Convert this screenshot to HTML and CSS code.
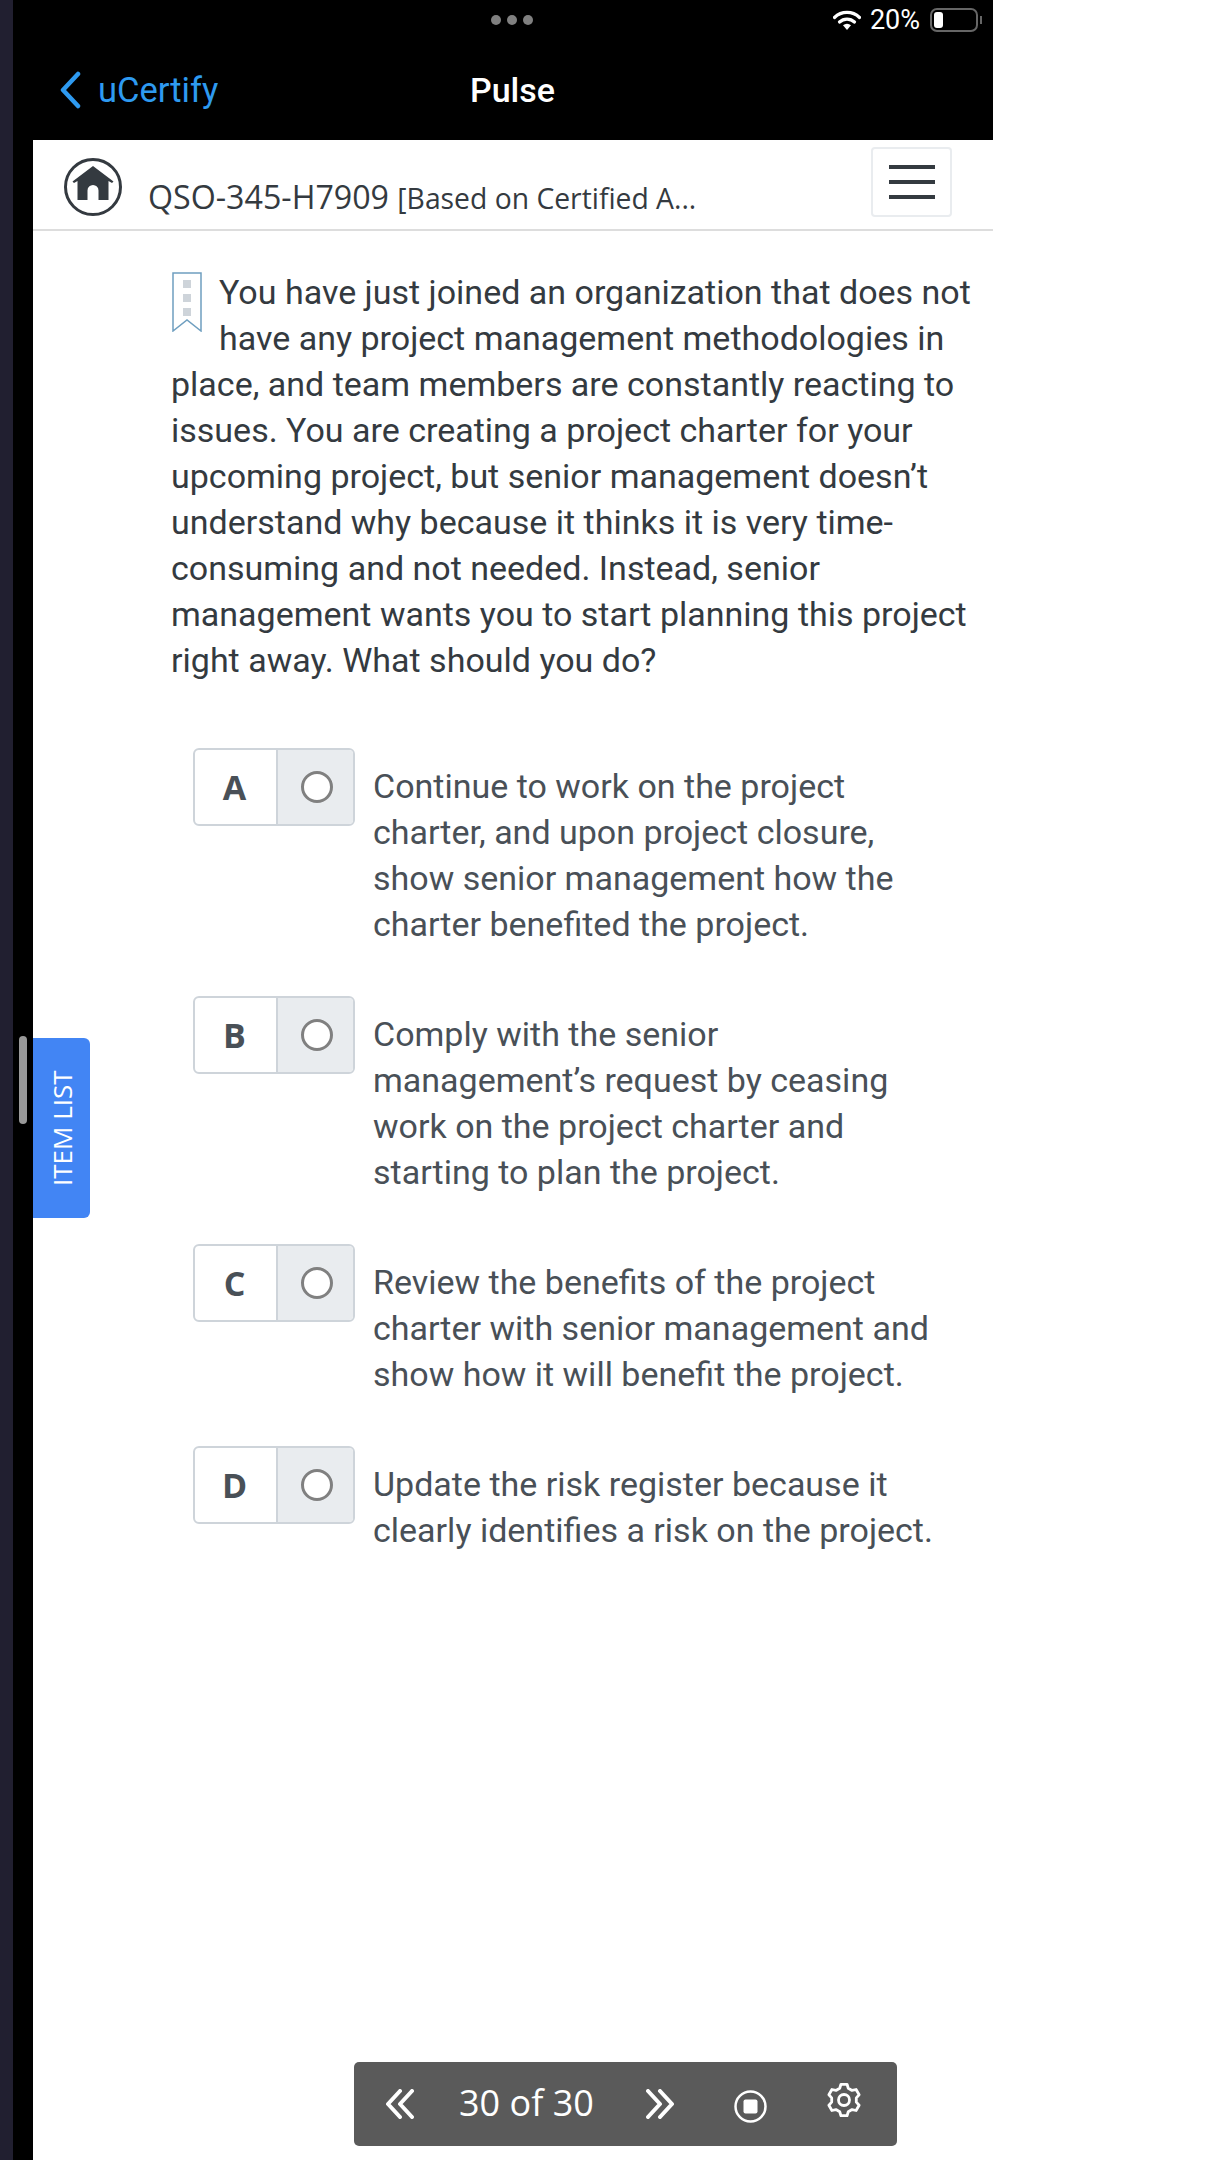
FILE: index.html
```html
<!DOCTYPE html>
<html lang="en">
    <head>
        <meta charset="UTF-8">
        <meta name="viewport" content="width=device-width, initial-scale=1.0">
        <title>Pulse</title>
        <link rel="stylesheet" href="styles.css">
    </head>
    <body>
        <div class="rail"></div>
        <div class="phone">
            <div class="status-bar">
                <div class="dots"><span></span><span></span><span></span></div>
                <div class="status-right">
                    <svg class="wifi" width="28" height="20" viewBox="0 0 28 20">
                        <path d="M1.5 7.5a18 18 0 0 1 25 0" fill="none" stroke="#fff" stroke-width="3.2" stroke-linecap="round"/>
                        <path d="M6.5 12a11 11 0 0 1 15 0" fill="none" stroke="#fff" stroke-width="3.2" stroke-linecap="round"/>
                        <path d="M10 15.2a6 6 0 0 1 8 0L14 20z" fill="#fff"/>
                    </svg>
                    <span class="battery-pct">20%</span>
                    <div class="battery"><div class="battery-fill"></div></div>
                    <div class="battery-nub"></div>
                </div>
            </div>
            <div class="nav-bar">
                <div class="nav-back">
                    <svg width="24" height="38" viewBox="0 0 24 38">
                        <path d="M20 3L5 19l15 16" fill="none" stroke="#2e9af0" stroke-width="4.5" stroke-linecap="round" stroke-linejoin="round"/>
                    </svg>
                    <span>uCertify</span>
                </div>
                <div class="nav-title">Pulse</div>
            </div>
            <div class="sheet">
                <div class="top-bar">
                    <svg class="home" width="58" height="58" viewBox="0 0 58 58">
                        <circle cx="29" cy="29" r="27.5" fill="none" stroke="#343a40" stroke-width="3"/>
                        <path d="M29 8L49.5 23.5 48 25 44.5 23V42H34.5V32.5a5.5 5.5 0 0 0-11 0V42H13.5V23L10 25 8.5 23.5z" fill="#343a40"/>
                    </svg>
                    <div class="course-title">QSO-345-H7909 <small>[Based on Certified A...</small></div>
                    <button class="menu-btn"><span></span><span></span><span></span></button>
                </div>

                <div class="question">
                    <svg class="bookmark" width="30" height="60" viewBox="0 0 30 60">
                        <path d="M1 1H29V59L15 48 1 59z" fill="#fff" stroke="#6f9fc0" stroke-width="1.5"/>
                        <rect x="11" y="8" width="8" height="8" fill="#ced4da"/>
                        <rect x="11" y="22" width="8" height="8" fill="#ced4da"/>
                        <rect x="11" y="36" width="8" height="8" fill="#ced4da"/>
                    </svg>
                    You have just joined an organization that does not have any project management methodologies in place, and team members are constantly reacting to issues. You are creating a project charter for your upcoming project, but senior management doesn’t understand why because it thinks it is very time-consuming and not needed. Instead, senior management wants you to start planning this project right away. What should you do?
                </div>

                <div class="options">
                    <div class="option">
                        <div class="option-box">
                            <div class="option-letter">A</div>
                            <div class="option-radio"><span></span></div>
                        </div>
                        <div class="option-text">Continue to work on the project charter, and upon project closure, show senior management how the charter benefited the project.</div>
                    </div>
                    <div class="option">
                        <div class="option-box">
                            <div class="option-letter">B</div>
                            <div class="option-radio"><span></span></div>
                        </div>
                        <div class="option-text">Comply with the senior management’s request by ceasing work on the project charter and starting to plan the project.</div>
                    </div>
                    <div class="option">
                        <div class="option-box">
                            <div class="option-letter">C</div>
                            <div class="option-radio"><span></span></div>
                        </div>
                        <div class="option-text">Review the benefits of the project charter with senior management and show how it will benefit the project.</div>
                    </div>
                    <div class="option">
                        <div class="option-box">
                            <div class="option-letter">D</div>
                            <div class="option-radio"><span></span></div>
                        </div>
                        <div class="option-text">Update the risk register because it clearly identifies a risk on the project.</div>
                    </div>
                </div>

                <div class="pager">
                    <svg class="pager-prev" width="28" height="30" viewBox="0 0 28 30">
                        <path d="M14 2L2 15l12 13M26 2L14 15l12 13" fill="none" stroke="#fff" stroke-width="4" stroke-linecap="round" stroke-linejoin="round"/>
                    </svg>
                    <span class="pager-count">30 of 30</span>
                    <svg class="pager-next" width="28" height="30" viewBox="0 0 28 30">
                        <path d="M2 2l12 13L2 28M14 2l12 13-12 13" fill="none" stroke="#fff" stroke-width="4" stroke-linecap="round" stroke-linejoin="round"/>
                    </svg>
                    <svg class="pager-stop" width="33" height="33" viewBox="0 0 33 33">
                        <circle cx="16.5" cy="16.5" r="15" fill="none" stroke="#fff" stroke-width="2.5"/>
                        <rect x="9.5" y="9.5" width="14" height="14" rx="2" fill="#fff"/>
                    </svg>
                    <svg class="pager-gear" width="36" height="36" viewBox="0 0 36 36">
                        <path d="M13.72 6.25L14.95 2.29H21.05L22.28 6.25 26.04 8.42 30.08 7.5 33.13 12.79 30.31 15.83V20.17L33.13 23.21 30.08 28.5 26.04 27.58 22.28 29.75 21.05 33.71H14.95L13.72 29.75 9.96 27.58 5.92 28.5 2.87 23.21 5.69 20.17V15.83L2.87 12.79 5.92 7.5 9.96 8.42z" fill="none" stroke="#fff" stroke-width="2.8" stroke-linejoin="round"/>
                        <circle cx="18" cy="18" r="5.5" fill="none" stroke="#fff" stroke-width="2.8"/>
                    </svg>
                </div>

                <div class="item-list-tab">ITEM LIST</div>
            </div>
            <div class="scroll-thumb"></div>
        </div>
    </body>
</html>
```

FILE: styles.css
```css
body {
    font-family: Roboto, "Liberation Sans", sans-serif;
    margin: 0;
    padding: 0;
    display: flex;
    height: 2160px;
    overflow: hidden;
    background-color: #fff;
}

.rail {
    width: 13px;
    background-color: #211f30;
}

.phone {
    position: relative;
    width: 980px;
    display: flex;
    flex-direction: column;
    background-color: #000;
}

/* status bar */
.status-bar {
    position: relative;
    height: 40px;
    display: flex;
    justify-content: flex-end;
    align-items: center;
    padding-right: 11px;
}

.dots {
    position: absolute;
    left: 478px;
    top: 15px;
    display: flex;
    gap: 6px;
}

.dots span {
    width: 10px;
    height: 10px;
    border-radius: 50%;
    background-color: #808080;
}

.status-right {
    display: flex;
    align-items: center;
    color: #fff;
}

.battery-pct {
    font-size: 27px;
    margin: 0 10px 0 9px;
}

.battery {
    width: 48px;
    height: 24px;
    box-sizing: border-box;
    border: 2px solid #666;
    border-radius: 7px;
    padding: 2px;
}

.battery-fill {
    width: 9px;
    height: 100%;
    background-color: #fff;
    border-radius: 3px;
}

.battery-nub {
    width: 2px;
    height: 8px;
    margin-left: 2px;
    background-color: #666;
}

/* nav bar */
.nav-bar {
    position: relative;
    height: 100px;
    display: flex;
    align-items: center;
    padding-left: 45px;
    color: #fff;
}

.nav-back {
    display: flex;
    align-items: center;
    gap: 16px;
    color: #2e9af0;
    font-size: 34.5px;
}

.nav-title {
    position: absolute;
    left: 457px;
    top: 30px;
    font-size: 34px;
    font-weight: 500;
}

/* white page */
.sheet {
    position: relative;
    flex: 1;
    margin-left: 20px;
    display: flex;
    flex-direction: column;
    background-color: #fff;
}

.top-bar {
    height: 89px;
    display: flex;
    align-items: flex-start;
    padding-left: 31px;
    padding-right: 41px;
    border-bottom: 2px solid #ddd;
}

.home {
    margin-top: 18px;
    flex-shrink: 0;
}

.course-title {
    flex: 1;
    margin-top: 37px;
    margin-left: 26px;
    font-family: "Open Sans", sans-serif;
    font-size: 32.2px;
    line-height: 40px;
    color: #343a40;
    white-space: nowrap;
}

.course-title small {
    font-size: 28.3px;
}

.menu-btn {
    width: 81px;
    height: 70px;
    margin-top: 7px;
    padding: 0;
    background-color: #fff;
    border: 2px solid #e9ecef;
    border-radius: 4px;
    display: flex;
    flex-direction: column;
    align-items: center;
    justify-content: center;
    gap: 11px;
}

.menu-btn span {
    width: 46px;
    height: 4px;
    background-color: #343a40;
}

.question {
    margin: 38px 16px 0 138px;
    font-size: 34px;
    line-height: 46px;
    color: #343a40;
}

.bookmark {
    float: left;
    margin: 3px 17px 0 1px;
}

.options {
    margin: 65px 0 0 160px;
}

.option {
    display: flex;
    margin-bottom: 49px;
}

.option-box {
    flex-shrink: 0;
    width: 162px;
    height: 78px;
    box-sizing: border-box;
    display: flex;
    border: 2px solid #ced4da;
    border-radius: 6px;
    overflow: hidden;
}

.option-letter {
    width: 83px;
    box-sizing: border-box;
    padding-right: 2px;
    display: flex;
    align-items: center;
    justify-content: center;
    border-right: 2px solid #ced4da;
    font-family: "Open Sans", sans-serif;
    font-size: 34px;
    font-weight: 700;
    color: #495057;
}

.option-radio {
    flex: 1;
    display: flex;
    align-items: center;
    justify-content: center;
    padding-left: 3px;
    background-color: #e9ecef;
}

.option-radio span {
    width: 32px;
    height: 32px;
    box-sizing: border-box;
    border: 3px solid #808080;
    border-radius: 50%;
    background-color: #fff;
}

.option-text {
    width: 565px;
    margin: 15px 0 0 18px;
    font-size: 34px;
    line-height: 46px;
    color: #495057;
}

/* bottom pager */
.pager {
    align-self: flex-start;
    margin: auto 0 14px 321px;
    width: 543px;
    height: 84px;
    box-sizing: border-box;
    padding-left: 32px;
    display: flex;
    align-items: center;
    background-color: #5a5a5a;
    border-radius: 5px;
    color: #fff;
}

.pager-count {
    margin: 0 52px 4px 45px;
    font-family: "Open Sans", sans-serif;
    font-size: 36px;
    font-weight: 400;
    white-space: nowrap;
}

.pager-stop {
    margin: 4px 0 0 60px;
}

.pager-gear {
    margin: 0 0 8px 59px;
}

.item-list-tab {
    position: absolute;
    left: 0;
    top: 898px;
    width: 57px;
    height: 180px;
    display: flex;
    align-items: center;
    justify-content: center;
    writing-mode: vertical-rl;
    transform: rotate(180deg);
    background-color: #4285f4;
    border-radius: 6px 0 0 6px;
    font-family: "Open Sans", sans-serif;
    font-size: 26px;
    color: #fff;
}

.scroll-thumb {
    position: absolute;
    left: 6px;
    top: 1036px;
    width: 8px;
    height: 88px;
    border-radius: 4px;
    background-color: #999;
}
```
